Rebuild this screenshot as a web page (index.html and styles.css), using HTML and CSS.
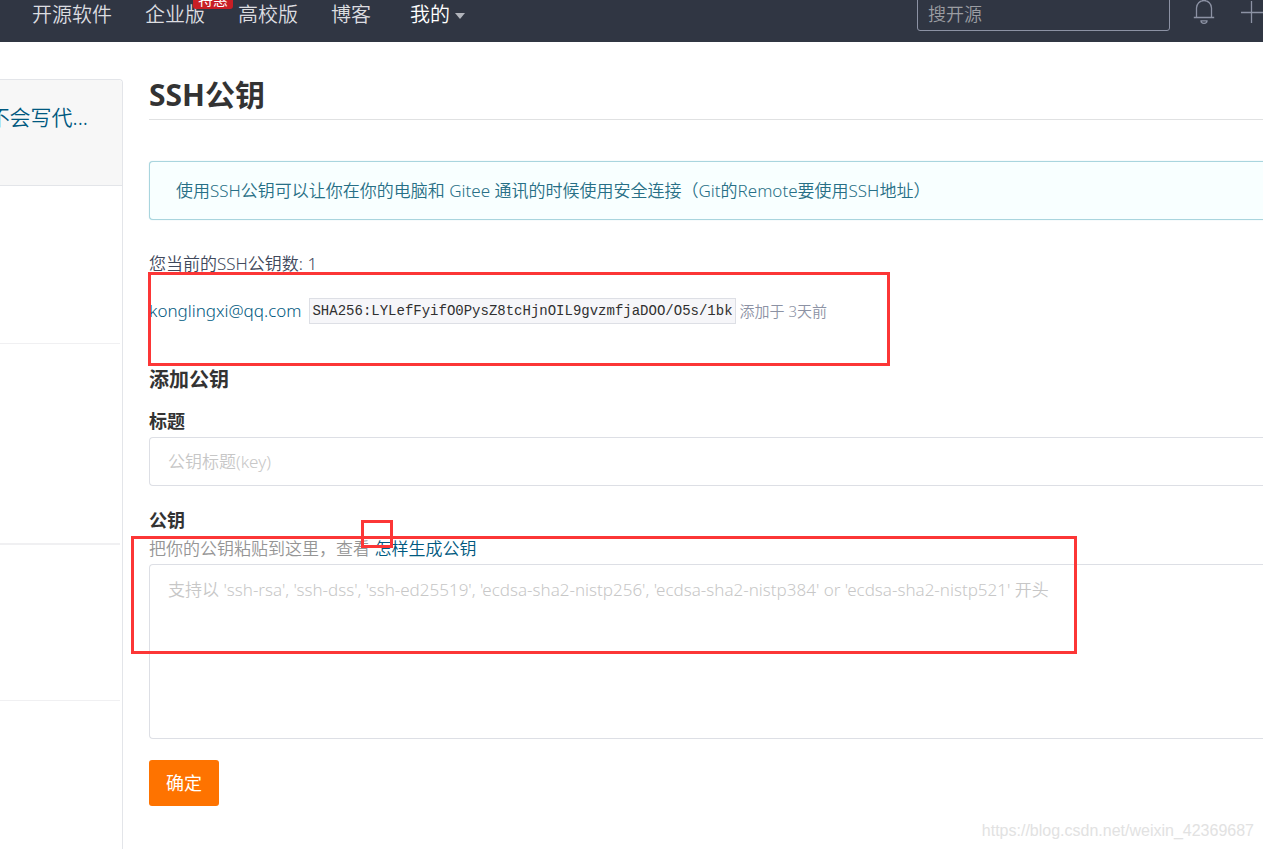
FILE: index.html
```html
<!DOCTYPE html>
<html lang="zh-CN">
<head>
<meta charset="utf-8">
<title>SSH公钥</title>
<link rel="stylesheet" href="styles.css">
</head>
<body>
<header class="topbar">
  <div class="topbar-inner">
    <nav class="nav">
      <a href="#">开源软件</a>
      <a href="#" class="has-badge">企业版<span class="badge">特惠</span></a>
      <a href="#">高校版</a>
      <a href="#">博客</a>
      <a href="#" class="mine">我的<span class="caret"></span></a>
    </nav>
    <input class="search" type="search" placeholder="搜开源" aria-label="搜开源">
    <button class="icon-btn bell" type="button" aria-label="通知">
      <svg width="22" height="26" viewBox="0 0 22 26" fill="none" stroke="#8c92a4" stroke-width="1.3"><path d="M3.5 19.5V10a7.5 7.5 0 0 1 15 0v9.5M.8 19.5h20.4M9.5 2.5V1h3v1.5M8 22.8h6c0 1.600-1.300 2.500-3 2.500s-3-.9-3-2.500z"/></svg>
    </button>
    <button class="icon-btn plus" type="button" aria-label="新建">
      <svg width="22" height="22" viewBox="0 0 22 22" fill="none" stroke="#8c92a4" stroke-width="1.300"><path d="M0 11.500h22M10.500 0v22"/></svg>
    </button>
  </div>
</header>
<div class="layout">
  <aside class="sidebar">
    <div class="profile"><a href="#">不会写代...</a></div>
    <div class="group first"></div>
    <div class="group second"></div>
    <div class="group third"></div>
  </aside>
  <main class="content">
    <h1>SSH公钥</h1>
    <div class="notice">使用SSH公钥可以让你在你的电脑和 Gitee 通讯的时候使用安全连接（Git的Remote要使用SSH地址）</div>
    <p class="count">您当前的SSH公钥数: 1</p>
    <div class="key-row">
      <a href="#">konglingxi@qq.com</a>
      <code>SHA256:LYLefFyifO0PysZ8tcHjnOIL9gvzmfjaDOO/O5s/1bk</code>
      <span class="added">添加于 3天前</span>
    </div>
    <form>
      <h2>添加公钥</h2>
      <label for="title">标题</label>
      <input id="title" class="field" type="text" placeholder="公钥标题(key)">
      <label for="key">公钥</label>
      <p class="help">把你的公钥粘贴到这里，查看 <a href="#">怎样生成公钥</a></p>
      <textarea id="key" class="field" placeholder="支持以 'ssh-rsa', 'ssh-dss', 'ssh-ed25519', 'ecdsa-sha2-nistp256', 'ecdsa-sha2-nistp384' or 'ecdsa-sha2-nistp521' 开头"></textarea>
      <button class="submit" type="button">确定</button>
    </form>
  </main>
</div>
<div class="mark mark-key"></div>
<div class="mark mark-small"></div>
<div class="mark mark-input"></div>
<div class="watermark">https://blog.csdn.net/weixin_42369687</div>
</body>
</html>
```
FILE: styles.css
```css
* { box-sizing: border-box; }
body {
  margin: 0;
  position: relative;
  min-height: 100vh;
  display: flex;
  flex-direction: column;
  overflow: hidden;
  background: #fff;
  color: #40485b;
  font: 350 17px/24px "Noto Sans", "Noto Sans CJK SC", sans-serif;
}
a { color: #005980; text-decoration: none; }
h1, h2, p { margin: 0; }
input, textarea, button { font: inherit; }

.topbar { height: 42px; overflow: hidden; background: #303643; }
.topbar-inner {
  display: flex;
  align-items: center;
  height: 56px;
  margin-top: -14px;
  padding-left: 32px;
}
.nav { display: flex; gap: 33px; padding-top: 1px; font-size: 20px; line-height: 28px; }
.nav a { color: #dcdde0; white-space: nowrap; }
.has-badge { position: relative; }
.badge {
  position: absolute;
  left: 48px;
  top: -12px;
  padding: 0 5px;
  border-radius: 3px;
  background: #c81e25;
  color: #fff;
  font-size: 15px;
  font-weight: 400;
  line-height: 20px;
}
.nav .mine { display: flex; align-items: center; gap: 5px; padding-left: 6px; color: #fff; }
.caret { border: 5px solid transparent; border-top: 6px solid #b1b4bb; border-bottom: 0; margin-top: 3px; }
.search {
  width: 253px;
  height: 34px;
  margin-left: auto;
  padding: 0 10px;
  border: 1px solid #8c92a4;
  border-radius: 3px;
  background: transparent;
  color: #fff;
  font-size: 18px;
}
.search::placeholder { color: #9b9da2; opacity: 1; }
.icon-btn { display: flex; flex: none; padding: 0; border: 0; background: none; }
.bell { margin-left: 23px; margin-bottom: 6px; }
.plus { margin-left: 26px; margin-bottom: 4px; }

.layout { flex: 1; display: flex; padding-top: 37px; }
.sidebar {
  flex: none;
  width: 123px;
  border: 1px solid #e3e5e9;
  border-width: 1px 1px 0 0;
  border-top-right-radius: 4px;
}
.profile {
  display: flex;
  justify-content: flex-end;
  height: 106px;
  padding: 23px 34px 0 0;
  background: #f7f7f7;
  border-bottom: 1px solid #e3e5e9;
  border-top-right-radius: 4px;
  font-size: 21px;
  line-height: 28px;
  white-space: nowrap;
}
.group { margin-right: 2px; border-bottom: 1px solid #f0f0f2; }
.first { height: 158px; }
.second { height: 201px; border-bottom-width: 2px; }
.third { height: 156px; }

.content { flex: 1; min-width: 0; padding-left: 26px; }
h1 {
  height: 41px;
  border-bottom: 1px solid #e0e1e2;
  color: #333;
  font-size: 30px;
  line-height: 32px;
}
.notice {
  margin-top: 41px;
  padding: 17px 26px 16px;
  border: 1px solid #a9d5de;
  border-right: 0;
  border-radius: 4px 0 0 4px;
  box-shadow: 0 0 1px #a9d5de;
  background: #f8ffff;
  color: #276f86;
  white-space: nowrap;
}
.count { margin-top: 32px; }
.key-row {
  display: flex;
  align-items: center;
  gap: 4px;
  height: 28px;
  margin-top: 21px;
  white-space: nowrap;
}
code {
  margin-left: 4px;
  padding: 0 2px;
  border: 1px solid #dddfe5;
  background: #f6f6f9;
  color: #303030;
  font: 14px/24px "Liberation Mono", monospace;
}
.added { color: #8c92a4; font-size: 15px; }
h2 { margin-top: 43px; color: #333; font-size: 20px; line-height: 24px; }
label { display: block; color: #333; font-weight: 700; font-size: 18px; }
h2 + label { margin-top: 17px; }
.field {
  display: block;
  width: 100%;
  padding: 0 18px;
  border: 1px solid #dddfe5;
  border-right: 0;
  border-radius: 4px 0 0 4px;
  background: #fff;
  resize: none;
}
.field::placeholder { color: #c7c7c7; opacity: 1; }
input.field { height: 49px; margin: 4px 0 22px; }
.help { margin-top: 5px; color: #959595; }
textarea.field { height: 175px; margin-top: 3px; padding-top: 13px; }
.submit {
  display: block;
  margin-top: 21px;
  width: 70px;
  height: 46px;
  padding: 0;
  border: 0;
  border-radius: 3px;
  background: #fe7300;
  color: #fff;
  font-size: 18px;
  font-weight: 400;
}
.mark { position: absolute; border: 3px solid #fc3636; pointer-events: none; }
.mark-key { left: 148px; top: 272px; width: 742px; height: 94px; }
.mark-small { left: 361px; top: 520px; width: 32px; height: 28px; }
.mark-input { left: 131px; top: 536px; width: 946px; height: 118px; }
.watermark {
  position: absolute;
  right: 9px;
  bottom: 8px;
  color: #e2e2e2;
  font: 16px/20px "Liberation Sans", sans-serif;
}
```
